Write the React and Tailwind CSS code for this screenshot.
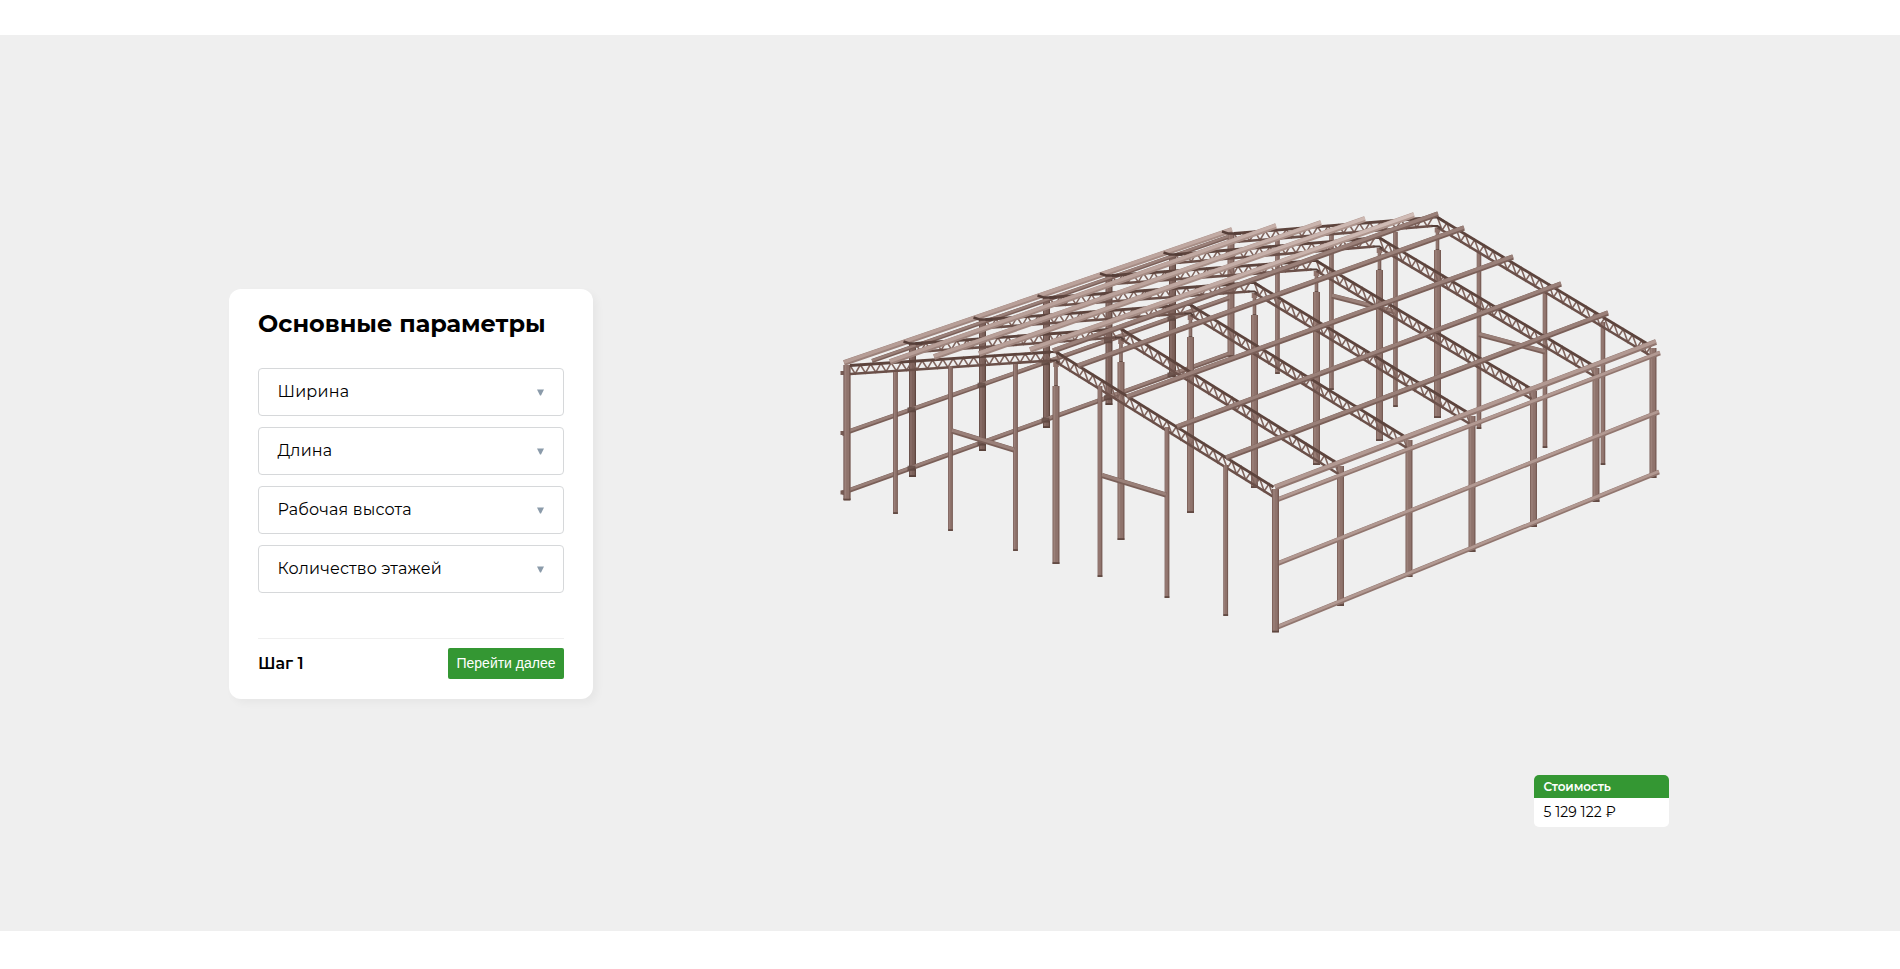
const OUTLINE = '#765b54';
const MID = '#8f736c';
const DARK = '#553e38';

// Frames run from the front gable to the rear one: [x, y] for eaves and ridge.
const FRAMES = [
  { left: [847, 365, 500], ridge: [1056, 352, 387, 564], right: [1275.5, 487, 632] },
  { left: [912.5, 343, 477], ridge: [1121, 329, 363, 540], right: [1340.5, 464, 606] },
  { left: [982.5, 319, 451], ridge: [1190.5, 305, 338, 513], right: [1409, 438, 577] },
  { left: [1046.5, 297, 428], ridge: [1254.5, 283, 316, 488], right: [1472, 414, 552] },
  { left: [1109, 275, 405], ridge: [1316.5, 261, 293, 465], right: [1533.5, 389, 527] },
  { left: [1172.5, 254, 377], ridge: [1379.5, 238, 271, 441], right: [1596, 366, 502] },
  { left: [1231, 233, 357], ridge: [1437.5, 217.5, 251, 418], right: [1653, 346, 478] },
];

const REAR_POSTS = [
  [1277.5, 240, 374],
  [1331.5, 235, 390],
  [1395.5, 232, 407],
  [1479, 252, 429],
  [1545, 290, 448],
  [1603, 322, 465],
];

const FRONT_POSTS = [
  [895.5, 372, 514],
  [950.5, 366, 531],
  [1015.5, 364, 551],
  [1100, 386, 577],
  [1167, 427, 598],
  [1225.7, 465, 616],
];

const LEFT_PURLINS = [
  [844, 363, 1232, 230],
  [890, 362, 1276, 226],
  [934, 357, 1321, 223],
  [979, 354, 1365, 219],
  [1030, 350, 1414, 215],
];

const RIGHT_PURLINS = [
  [1053, 351, 1438, 214],
  [1078, 366, 1464, 228],
  [1127, 397, 1513, 257],
  [1177, 427, 1561, 284],
  [1226, 458, 1608, 313],
];

function Column({ x, top, bottom, w = 7, dark = false }) {
  return (
    <g>
      <path d={`M${x} ${top}V${bottom}`} stroke={dark ? '#5f4740' : OUTLINE} strokeWidth={w} />
      <path d={`M${x - w * 0.05} ${top}V${bottom - 1.5}`} stroke={dark ? '#7c615a' : MID} strokeWidth={w - 1.8} />
      <path d={`M${x - w * 0.22} ${top}V${bottom - 2}`} stroke={dark ? '#8a6f68' : '#9b8079'} strokeWidth={w * 0.2} />
      <path d={`M${x - w / 2} ${bottom - 1}H${x + w / 2}`} stroke={DARK} strokeWidth="1.6" opacity="0.7" />
    </g>
  );
}

function Beam({ p, w = 4, tone = 'mid' }) {
  const [x1, y1, x2, y2] = p;
  const edge = tone === 'fade' ? 'url(#purlinEdge)' : tone === 'light' ? '#91766f' : '#7a5f58';
  const face = tone === 'fade' ? 'url(#purlinFace)' : tone === 'light' ? '#b29992' : '#9a8079';
  return (
    <g>
      <path d={`M${x1} ${y1}L${x2} ${y2}`} stroke={edge} strokeWidth={w} />
      <path d={`M${x1} ${y1 - w * 0.16}L${x2} ${y2 - w * 0.16}`} stroke={face} strokeWidth={w * 0.6} />
    </g>
  );
}

function Truss({ from, to, depth, step = 5.2 }) {
  const [x1, y1] = from;
  const [x2, y2] = to;
  const count = Math.max(2, Math.round((x2 - x1) / step));
  const points = [];
  for (let i = 0; i <= count; i += 1) {
    const t = i / count;
    const x = x1 + (x2 - x1) * t;
    const y = y1 + (y2 - y1) * t + (i % 2 ? depth : 0);
    points.push(`${x.toFixed(1)},${y.toFixed(1)}`);
  }
  return (
    <g stroke={DARK} fill="none">
      <polyline points={points.join(' ')} strokeWidth="1.6" stroke="#80655e" />
      <path d={`M${x1} ${y1}L${x2} ${y2}`} strokeWidth="2.8" stroke="#5d443d" />
      <path d={`M${x1} ${y1 + depth}L${x2} ${y2 + depth}`} strokeWidth="2.6" stroke="#6b5049" />
    </g>
  );
}

function Frame({ left, ridge, right }) {
  return (
    <g>
      <Column x={ridge[0]} top={ridge[1] + 10} bottom={ridge[2]} w={3.6} />
      <Column x={ridge[0]} top={ridge[2] - 1} bottom={ridge[3]} w={7} />
      <path d={`M${ridge[0] - 2.8} ${ridge[1] + 10}h5.6v5h-5.6z`} fill={MID} />
      <Truss from={[left[0] + 3, left[1] + 0.5]} to={[ridge[0] - 5, ridge[1]]} depth={8.5} />
      <Truss from={[ridge[0], ridge[1]]} to={[right[0] - 2, right[1]]} depth={10} step={4.6} />
      <path d={`M${ridge[0] - 6} ${ridge[1]}h7l6 4M${ridge[0] - 6} ${ridge[1] + 8.5}h6l3 2`} stroke={DARK} strokeWidth="1.8" />
    </g>
  );
}

function SteelFrame() {
  const rear = [...FRAMES].reverse();
  return (
    <svg className="block h-[445px] w-[840px]" viewBox="830 200 840 445" fill="none" aria-hidden="true">
      <defs>
        <linearGradient id="purlinFace" gradientUnits="userSpaceOnUse" x1="844" y1="0" x2="1420" y2="0">
          <stop offset="0" stopColor="#b59c95" />
          <stop offset="0.5" stopColor="#bba39c" />
          <stop offset="1" stopColor="#d2beb8" />
        </linearGradient>
        <linearGradient id="purlinEdge" gradientUnits="userSpaceOnUse" x1="844" y1="0" x2="1420" y2="0">
          <stop offset="0" stopColor="#9a8079" />
          <stop offset="1" stopColor="#b0978f" />
        </linearGradient>
      </defs>
      {REAR_POSTS.map(([x, top, bottom]) => (
        <Column key={x} x={x} top={top} bottom={bottom} w={4.6} />
      ))}
      <Beam p={[1332, 296, 1395, 312]} w={5} />
      <Beam p={[1479, 334.5, 1545, 352]} w={5} />

      {rear.map((f) => (
        <Column key={f.left[0]} x={f.left[0]} top={f.left[1]} bottom={f.left[2]} w={f.left[0] < 850 ? 6.8 : 7} dark={f.left[0] > 850 && f.left[0] < 1200} />
      ))}
      <Beam p={[872, 361, 1228, 237]} w={4} />
      <Beam p={[842, 434, 1229, 298]} w={4.6} />
      <Beam p={[842, 493, 1229, 354]} w={4.6} />
      {FRAMES.slice(1, 6).map((f) => (
        <g key={f.left[0]} fill={DARK}>
          <rect x={f.left[0] - 5} y={434 - (f.left[0] - 842) * 0.3514 - 2} width="8" height="5" opacity=".65" />
          <rect x={f.left[0] - 5} y={493 - (f.left[0] - 842) * 0.359 - 2} width="8" height="5" opacity=".65" />
        </g>
      ))}
      <g fill={OUTLINE}>
        <rect x="840.5" y="371" width="5" height="4" />
        <rect x="840.5" y="431" width="5" height="4" />
        <rect x="840.5" y="490.5" width="5" height="4" />
      </g>
      <Column x={847} top={365} bottom={500.5} w={6.8} />

      {rear.map((f) => (
        <Column key={f.right[0]} x={f.right[0]} top={f.right[1] + 2} bottom={f.right[2]} w={7} />
      ))}

      {rear.map((f) => (
        <Frame key={f.ridge[0]} {...f} />
      ))}

      {FRONT_POSTS.map(([x, top, bottom]) => (
        <Column key={x} x={x} top={top} bottom={bottom} w={4.8} />
      ))}
      <Beam p={[952, 431, 1014, 450]} w={5} />
      <Beam p={[1102, 475.5, 1166, 495]} w={5} />

      {LEFT_PURLINS.map((p) => (
        <Beam key={p[0]} p={p} w={5.6} tone="fade" />
      ))}
      {FRAMES.slice(1).map((f) => (
        <path key={f.left[0]} d={`M${f.left[0] - 9} ${f.left[1] - 1.5}l6 2h13`} stroke={DARK} strokeWidth="2.4" />
      ))}
      {RIGHT_PURLINS.map((p) => (
        <Beam key={p[0]} p={p} w={5.4} />
      ))}

      <Beam p={[1275, 487.5, 1656, 342]} w={5.8} tone="light" />
      <Beam p={[1278, 499.5, 1660, 353]} w={4.6} tone="light" />
      <Beam p={[1278, 563.5, 1659, 412]} w={4.6} tone="light" />
      <Beam p={[1278, 627, 1659, 472]} w={4.6} tone="light" />
      <Column x={1275.5} top={489} bottom={632.5} w={6.8} />
    </svg>
  );
}

const FIELDS = ['Ширина', 'Длина', 'Рабочая высота', 'Количество этажей'];

function ParameterSelect({ label }) {
  return (
    <button type="button" className="flex h-12 w-full items-center justify-between rounded-[4px] border border-[#d6d8da] bg-white pr-[19px] pl-[18.5px] text-left">
      <span className="text-[16px] leading-5 tracking-[0.17px] text-black">{label}</span>
      <svg className="h-[7px] w-[7px]" viewBox="0 0 7 7" aria-hidden="true">
        <path d="M0 .5h7L4 6.5H3z" fill="#8b9baa" />
      </svg>
    </button>
  );
}

export default function App() {
  return (
    <div className="h-[969px] overflow-hidden bg-white pt-[35px] font-['Montserrat','Inter',sans-serif]">
      <section className="flex h-[896px] bg-[#efefef] pl-[229px]">
        <div className="mt-[254px] flex h-[410px] w-[364px] shrink-0 flex-col rounded-xl bg-white pt-5 pr-5 pl-[29px] shadow-[4px_4px_8px_rgba(0,0,0,0.04)]">
          <h2 className="text-[24px] leading-[30px] font-bold whitespace-nowrap text-black">Основные параметры</h2>
          <div className="mt-[29px] flex w-[306px] flex-col gap-[11px]">
            {FIELDS.map((label) => (
              <ParameterSelect key={label} label={label} />
            ))}
          </div>
          <div className="mt-[45px] flex w-[306px] items-center justify-between border-t border-[#efefef] pt-[9px]">
            <span className="text-[16px] leading-5 font-semibold text-black">Шаг 1</span>
            <button type="button" className="h-[31px] w-[116px] rounded-[2px] bg-[#349733] font-['Liberation_Sans',sans-serif] text-[14px] whitespace-nowrap text-white">
              Перейти далее
            </button>
          </div>
        </div>
        <div className="ml-[237px] flex w-[840px] flex-col items-end pt-[165px]">
          <SteelFrame />
          <div className="mt-[130px] mr-px h-[52px] w-[135px] overflow-hidden rounded-[5px] bg-white">
            <div className="flex h-[23px] items-center bg-[#349733] pl-[9.5px] text-[12px] font-semibold tracking-[-0.1px] text-white">Стоимость</div>
            <div className="flex h-[29px] items-center pl-[9.5px] text-[14px] tracking-[0.05px] text-black">5 129 122 ₽</div>
          </div>
        </div>
      </section>
    </div>
  );
}
